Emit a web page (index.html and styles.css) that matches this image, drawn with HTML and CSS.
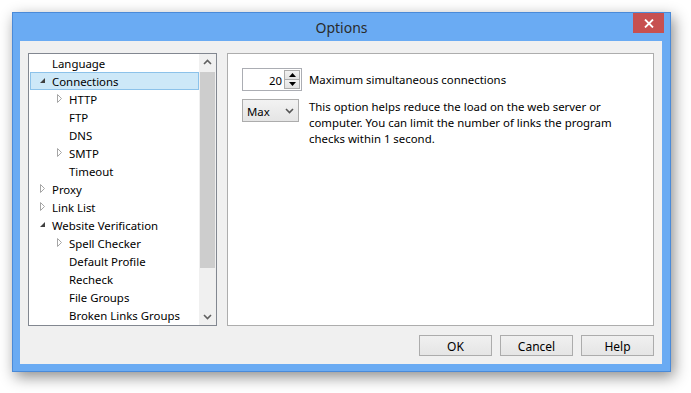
FILE: index.html
```html
<!DOCTYPE html>
<html>
<head>
<meta charset="utf-8">
<title>Options</title>
<link rel="stylesheet" href="styles.css">
</head>
<body>
<div class="window">
  <div class="titlebar">
    <span class="title">Options</span>
    <div class="close">
      <svg width="10" height="9" viewBox="0 0 10 9"><path d="M1 0.5 L9 8.5 M9 0.5 L1 8.5" stroke="#fff" stroke-width="1.8" fill="none"/></svg>
    </div>
  </div>
  <div class="client">
    <div class="panes">
      <div class="tree">
        <ul class="items">
          <li class="node l1"><span class="exp"></span><span class="label">Language</span></li>
          <li class="node l1 selected"><span class="exp"><svg width="16" height="18" viewBox="0 0 16 18"><path d="M9 6 L9 11 L4 11 Z" fill="#404040"/></svg></span><span class="label">Connections</span></li>
          <li class="node l2"><span class="exp"><svg width="16" height="18" viewBox="0 0 16 18"><path d="M4.5 4.5 L8.5 8.5 L4.5 12.5 Z" fill="none" stroke="#A6A6A6"/></svg></span><span class="label">HTTP</span></li>
          <li class="node l2"><span class="exp"></span><span class="label">FTP</span></li>
          <li class="node l2"><span class="exp"></span><span class="label">DNS</span></li>
          <li class="node l2"><span class="exp"><svg width="16" height="18" viewBox="0 0 16 18"><path d="M4.5 4.5 L8.5 8.5 L4.5 12.5 Z" fill="none" stroke="#A6A6A6"/></svg></span><span class="label">SMTP</span></li>
          <li class="node l2"><span class="exp"></span><span class="label">Timeout</span></li>
          <li class="node l1"><span class="exp"><svg width="16" height="18" viewBox="0 0 16 18"><path d="M4.5 4.5 L8.5 8.5 L4.5 12.5 Z" fill="none" stroke="#A6A6A6"/></svg></span><span class="label">Proxy</span></li>
          <li class="node l1"><span class="exp"><svg width="16" height="18" viewBox="0 0 16 18"><path d="M4.5 4.5 L8.5 8.5 L4.5 12.5 Z" fill="none" stroke="#A6A6A6"/></svg></span><span class="label">Link List</span></li>
          <li class="node l1"><span class="exp"><svg width="16" height="18" viewBox="0 0 16 18"><path d="M9 6 L9 11 L4 11 Z" fill="#404040"/></svg></span><span class="label">Website Verification</span></li>
          <li class="node l2"><span class="exp"><svg width="16" height="18" viewBox="0 0 16 18"><path d="M4.5 4.5 L8.5 8.5 L4.5 12.5 Z" fill="none" stroke="#A6A6A6"/></svg></span><span class="label">Spell Checker</span></li>
          <li class="node l2"><span class="exp"></span><span class="label">Default Profile</span></li>
          <li class="node l2"><span class="exp"></span><span class="label">Recheck</span></li>
          <li class="node l2"><span class="exp"></span><span class="label">File Groups</span></li>
          <li class="node l2"><span class="exp"></span><span class="label">Broken Links Groups</span></li>
        </ul>
        <div class="vscroll">
          <div class="sarrow"><svg width="17" height="17" viewBox="0 0 17 17"><path d="M5 10 L8.5 6.5 L12 10" fill="none" stroke="#606060" stroke-width="1.6"/></svg></div>
          <div class="track"><div class="thumb"></div></div>
          <div class="sarrow"><svg width="17" height="17" viewBox="0 0 17 17"><path d="M5 7 L8.5 10.5 L12 7" fill="none" stroke="#606060" stroke-width="1.6"/></svg></div>
        </div>
      </div>
      <div class="page">
        <div class="prow">
          <div class="spin">
            <span class="spinval">20</span>
            <div class="spinbtns">
              <div class="sbtn"><svg width="7" height="4" viewBox="0 0 7 4"><path d="M0 4 L3.5 0 L7 4 Z" fill="#000"/></svg></div>
              <div class="sbtn"><svg width="7" height="4" viewBox="0 0 7 4"><path d="M0 0 L3.5 4 L7 0 Z" fill="#000"/></svg></div>
            </div>
          </div>
          <span class="plabel">Maximum simultaneous connections</span>
        </div>
        <div class="prow top">
          <div class="combo">
            <span>Max</span>
            <svg width="9" height="6" viewBox="0 0 9 6"><path d="M1 1 L4.5 4.5 L8 1" fill="none" stroke="#555" stroke-width="1.6"/></svg>
          </div>
          <p class="desc">This option helps reduce the load on the web server or<br>computer. You can limit the number of links the program<br>checks within 1 second.</p>
        </div>
      </div>
    </div>
    <div class="buttons">
      <button class="btn">OK</button>
      <button class="btn">Cancel</button>
      <button class="btn">Help</button>
    </div>
  </div>
</div>
</body>
</html>
```
FILE: styles.css
```css
* { box-sizing: border-box; }
html, body { margin: 0; padding: 0; }
body {
  width: 691px;
  height: 393px;
  background: #ffffff;
  font-family: "Noto Sans", "Open Sans", sans-serif;
  font-size: 11.4px;
  color: #000;
  overflow: hidden;
}
.window {
  margin: 12px 0 0 12px;
  width: 659px;
  height: 360px;
  border: 1px solid #4a8ad8;
  background: #6aabf3;
  box-shadow: 3px 5px 14px rgba(0,0,0,0.45);
}
.titlebar {
  position: relative;
  height: 28px;
  display: flex;
  justify-content: center;
  align-items: center;
}
.title {
  font-size: 14px;
  color: #2b2b2b;
  line-height: 28px;
  padding-top: 1px;
}
.close {
  position: absolute;
  top: 0;
  right: 6px;
  width: 31px;
  height: 20px;
  background: #c75050;
  display: flex;
  align-items: center;
  justify-content: center;
}
.client {
  margin: 0 8px 0 7px;
  height: 323px;
  background: #f0f0f0;
  padding: 12px 8px 0 8px;
}
.panes {
  display: flex;
  gap: 10px;
  height: 273px;
}
.tree {
  width: 189px;
  border: 1px solid #828790;
  background: #fff;
  display: flex;
}
.items {
  list-style: none;
  margin: 0;
  padding: 0;
  width: 170px;
}
.node {
  height: 18px;
  display: flex;
  align-items: center;
  white-space: nowrap;
}
.node.l1 { padding-left: 7px; }
.node.l2 { padding-left: 24px; }
.exp {
  width: 16px;
  height: 18px;
  flex: none;
}
.exp svg { display: block; }
.label { line-height: 18px; padding-top: 1px; }
.node.selected {
  margin-left: 1px;
  padding-left: 5px;
  background: #cde8f8;
  border: 1px solid #8cc2ea;
}
.node.selected .exp { height: 16px; }
.node.selected .exp svg { margin-top: -1px; }
.vscroll {
  width: 17px;
  background: #f0f0f0;
  display: flex;
  flex-direction: column;
}
.sarrow { height: 17px; }
.sarrow svg { display: block; }
.track {
  flex: 1;
  padding: 1px 1px 40px 1px;
}
.thumb {
  height: 196px;
  background: #cdcdcd;
}
.page {
  width: 427px;
  border: 1px solid #adadad;
  background: #fff;
  padding: 14px 0 0 14px;
}
.prow {
  display: flex;
  align-items: center;
  gap: 7px;
}
.prow.top {
  align-items: flex-start;
  margin-top: 8px;
  gap: 10px;
}
.spin {
  width: 60px;
  height: 23px;
  border: 1px solid #abadb3;
  display: flex;
  align-items: center;
  padding: 1px;
}
.spinval {
  flex: 1;
  text-align: right;
  padding-right: 2px;
  padding-top: 1px;
}
.spinbtns {
  width: 16px;
  height: 19px;
  display: flex;
  flex-direction: column;
}
.sbtn {
  flex: 1;
  border: 1px solid #acacac;
  background: linear-gradient(#f2f2f2, #e2e2e2);
  display: flex;
  align-items: center;
  justify-content: center;
}
.sbtn + .sbtn { border-top: none; }
.sbtn svg { display: block; }
.combo {
  width: 57px;
  height: 23px;
  border: 1px solid #acacac;
  background: linear-gradient(#f2f2f2, #e5e5e5);
  display: flex;
  align-items: center;
  justify-content: space-between;
  padding: 1px 4px 0 4px;
  flex: none;
}
.combo svg { display: block; }
.desc {
  margin: 0;
  line-height: 16px;
}
.buttons {
  display: flex;
  justify-content: flex-end;
  gap: 8px;
  margin-top: 9px;
}
.btn {
  width: 73px;
  height: 21px;
  border: 1px solid #acacac;
  background: linear-gradient(#f0f0f0, #e5e5e5);
  font-family: inherit;
  font-size: 12px;
  color: #000;
  padding: 1px 0 0 0;
}
```
